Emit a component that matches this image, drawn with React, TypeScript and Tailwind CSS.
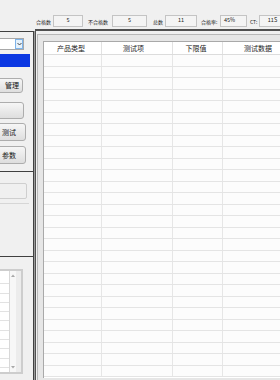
import React from "react";

const rowsRight = Array.from({ length: 28 }, (_, i) => i);
const rowsLeft = Array.from({ length: 11 }, (_, i) => i);

function Stat({
  label,
  value,
  labelW,
  boxW,
  ml,
  align,
}: {
  label: string;
  value: string;
  labelW: string;
  boxW: string;
  ml: string;
  align: string;
}) {
  return (
    <div className={`flex items-center shrink-0 ${ml}`}>
      <div className={`${labelW} text-[5px] leading-none text-[#222] whitespace-nowrap`}>{label}</div>
      <div
        className={`${boxW} h-[12px] border border-[#c4c4c4] bg-[#f4f4f4] flex items-center ${align} text-[5.5px] leading-none text-[#222]`}
      >
        {value}
      </div>
    </div>
  );
}

function Btn({ text, h, w, pr }: { text: string; h: string; w: string; pr: string }) {
  return (
    <div
      className={`-ml-[30px] ${w} ${h} rounded-[3px] border border-[#adadad] bg-gradient-to-b from-[#f6f6f6] to-[#dedede] flex items-center justify-end ${pr} text-[7px] leading-none text-[#111]`}
    >
      {text}
    </div>
  );
}

export default function App() {
  return (
    <div
      className="w-[280px] h-[380px] overflow-hidden bg-[#f0f0f0] flex flex-col"
      style={{ fontFamily: '"Noto Sans CJK SC", "Noto Sans", sans-serif' }}
    >
      {/* top stats bar */}
      <div className="h-[29px] shrink-0 flex items-start pt-[15px] pl-[36px] overflow-hidden">
        <Stat label="合格数" value="5" labelW="w-[17px]" boxW="w-[30px]" ml="" align="justify-center" />
        <Stat label="不合格数" value="5" labelW="w-[24px]" boxW="w-[35px]" ml="ml-[5px]" align="justify-center" />
        <Stat label="总数" value="11" labelW="w-[12px]" boxW="w-[32px]" ml="ml-[6px]" align="justify-center" />
        <Stat label="合格率:" value="45%" labelW="w-[19px]" boxW="w-[27px]" ml="ml-[4px]" align="justify-start pl-[3px]" />
        <Stat label="CT:" value="11S" labelW="w-[9px]" boxW="w-[27px]" ml="ml-[3px]" align="justify-center" />
      </div>

      {/* main */}
      <div className="flex-1 flex min-h-0">
        {/* left panel */}
        <div className="w-[34px] shrink-0 mt-[2px] border-r border-[#404040] flex flex-col overflow-hidden">
          {/* section A */}
          <div className="h-[140px] shrink-0 border-t border-[#404040] flex flex-col">
            <div className="mt-[6px] -ml-[20px] w-[44px] h-[12px] shrink-0 border border-[#a8a8a8] bg-white flex justify-end">
              <div className="w-[8px] h-full border border-[#7eb4ea] bg-[#e5f1fb] flex items-center justify-center">
                <svg width="5" height="4" viewBox="0 0 5 4">
                  <path d="M0.5 1 L2.5 3 L4.5 1" stroke="#333" strokeWidth="0.9" fill="none" />
                </svg>
              </div>
            </div>
            <div className="mt-[4px] w-[30px] h-[13px] shrink-0 bg-[#0a37e2]" />
            <div className="mt-[11px] shrink-0">
              <Btn text="管理" h="h-[15px]" w="w-[53px]" pr="pr-[3px]" />
            </div>
            <div className="mt-[9px] shrink-0">
              <Btn text="" h="h-[17px]" w="w-[54px]" pr="pr-[3px]" />
            </div>
            <div className="mt-[4px] shrink-0">
              <Btn text="测试" h="h-[18px]" w="w-[56px]" pr="pr-[9px]" />
            </div>
            <div className="mt-[5px] shrink-0">
              <Btn text="参数" h="h-[18px]" w="w-[56px]" pr="pr-[9px]" />
            </div>
          </div>
          {/* section B */}
          <div className="h-[85px] shrink-0 border-t border-[#404040] flex flex-col">
            <div className="mt-[11px] -ml-[20px] w-[47px] h-[16px] shrink-0 border border-[#cfcfcf] bg-[#f0f0f0] rounded-[2px]" />
            <div className="mt-[4px] w-[29px] h-[1px] shrink-0 bg-[#d6d6d6]" />
          </div>
          {/* section C */}
          <div className="flex-1 border-t border-[#404040] flex flex-col">
            <div className="mt-[12px] -ml-[20px] w-[43px] h-[105px] shrink-0 border-2 border-[#cdcdcd] bg-[#ececec] flex pr-[5px]">
              <div className="flex-1 bg-white flex flex-col overflow-hidden pt-[4px]">
                {rowsLeft.map((i) => (
                  <div key={i} className="h-[9.3px] shrink-0 border-b border-[#e2e2e2]" />
                ))}
              </div>
              <div className="w-[7px] border-l border-[#d8d8d8] bg-[#f7f7f7] flex flex-col items-center justify-between py-[3px]">
                <svg width="4" height="3" viewBox="0 0 4 3">
                  <path d="M0 3 L2 0.5 L4 3 Z" fill="#a8a8a8" />
                </svg>
                <svg width="4" height="3" viewBox="0 0 4 3">
                  <path d="M0 0 L2 2.5 L4 0 Z" fill="#a8a8a8" />
                </svg>
              </div>
            </div>
          </div>
        </div>

        {/* gap */}
        <div className="w-[1px] shrink-0 bg-[#9a9a9a] mt-[2px]" />

        {/* right panel */}
        <div className="flex-1 min-w-0 border-t-2 border-l border-[#505050] bg-[#f0f0f0] pt-[3px] pl-[1px] overflow-hidden">
          <div className="h-full border-t border-l border-[#b8b8b8] bg-[#e6e6e6] pt-[6px] pl-[5px] overflow-hidden">
            <div className="w-[300px] h-[337px] border-t border-l border-[#a9a9a9] bg-white flex flex-col overflow-hidden">
              {/* header */}
              <div className="h-[13px] shrink-0 flex border-b border-[#dcdcdc] bg-white text-[7px] leading-none text-[#222]">
                <div className="w-[58px] shrink-0 border-r border-[#e2e2e2] flex items-center justify-center pr-[3px]">产品类型</div>
                <div className="w-[71px] shrink-0 border-r border-[#e2e2e2] flex items-center justify-center pr-[7px]">测试项</div>
                <div className="w-[50px] shrink-0 border-r border-[#e2e2e2] flex items-center justify-center pr-[3px]">下限值</div>
                <div className="w-[76px] shrink-0 border-r border-[#e2e2e2] flex items-center justify-center pr-[5px]">测试数据</div>
              </div>
              {rowsRight.map((i) => (
                <div key={i} className="h-[11.5px] shrink-0 flex border-b border-[#e4e4e4] bg-[#fcfcfc]">
                  <div className="w-[58px] shrink-0 border-r border-[#e6e6e6]" />
                  <div className="w-[71px] shrink-0 border-r border-[#e6e6e6]" />
                  <div className="w-[50px] shrink-0 border-r border-[#e6e6e6]" />
                  <div className="w-[76px] shrink-0 border-r border-[#e6e6e6]" />
                </div>
              ))}
            </div>
          </div>
        </div>
      </div>
    </div>
  );
}
